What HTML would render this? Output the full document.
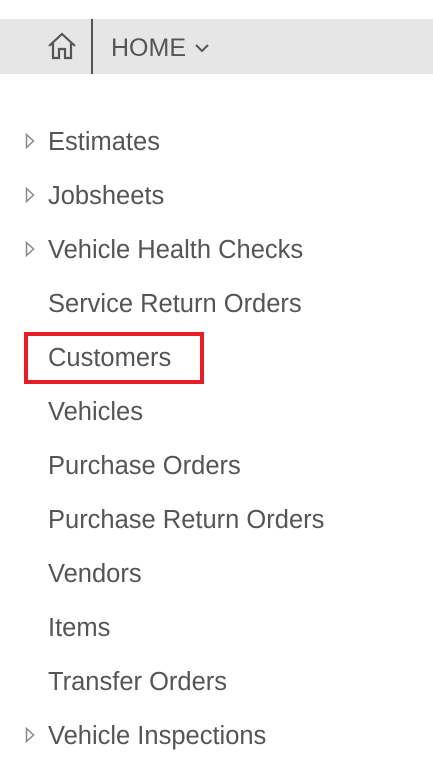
<!DOCTYPE html>
<html><head><style>
body{margin:0;width:433px;height:778px;background:#fff;font-family:"Liberation Sans",sans-serif;color:#555;position:relative;overflow:hidden}
.bar{position:absolute;left:0;top:19px;width:433px;height:55px;background:#e6e6e6}
.div{position:absolute;left:91px;top:19px;width:2px;height:55px;background:#555}
.home{position:absolute;left:111px;top:33px;font-size:25px;line-height:30px;color:#555}
.it{position:absolute;left:48px;font-size:25.5px;line-height:30px;white-space:nowrap;margin-top:1px}
.tri{position:absolute;left:25px}
.box{position:absolute;left:24px;top:332px;width:172px;height:44px;border:4px solid #e81c24}
</style></head><body>
<div class="bar"></div>
<svg style="position:absolute;left:46px;top:32px" width="32" height="28" viewBox="0 0 32 28"><path d="M3 14 L16 2 L29 14 M7 11 V26 H13 V17 H19 V26 H25 V11" fill="none" stroke="#555" stroke-width="2.2" stroke-linejoin="miter"/></svg>
<div class="div"></div>
<div class="home">HOME</div>
<svg style="position:absolute;left:194px;top:42px" width="16" height="12" viewBox="0 0 16 12"><path d="M2 3 L8 9 L14 3" fill="none" stroke="#555" stroke-width="2"/></svg>
<div class="box"></div>
<svg class="tri" style="top:133px" width="10" height="16"><path d="M1.5 1.5 L8.5 8 L1.5 14.5Z" fill="none" stroke="#888" stroke-width="1.5"/></svg>
<svg class="tri" style="top:187px" width="10" height="16"><path d="M1.5 1.5 L8.5 8 L1.5 14.5Z" fill="none" stroke="#888" stroke-width="1.5"/></svg>
<svg class="tri" style="top:241px" width="10" height="16"><path d="M1.5 1.5 L8.5 8 L1.5 14.5Z" fill="none" stroke="#888" stroke-width="1.5"/></svg>
<svg class="tri" style="top:727px" width="10" height="16"><path d="M1.5 1.5 L8.5 8 L1.5 14.5Z" fill="none" stroke="#888" stroke-width="1.5"/></svg>
<div class="it" style="top:126px">Estimates</div>
<div class="it" style="top:180px">Jobsheets</div>
<div class="it" style="top:234px">Vehicle Health Checks</div>
<div class="it" style="top:288px">Service Return Orders</div>
<div class="it" style="top:342px">Customers</div>
<div class="it" style="top:396px">Vehicles</div>
<div class="it" style="top:450px">Purchase Orders</div>
<div class="it" style="top:504px">Purchase Return Orders</div>
<div class="it" style="top:558px">Vendors</div>
<div class="it" style="top:612px">Items</div>
<div class="it" style="top:666px">Transfer Orders</div>
<div class="it" style="top:720px">Vehicle Inspections</div>
</body></html>
